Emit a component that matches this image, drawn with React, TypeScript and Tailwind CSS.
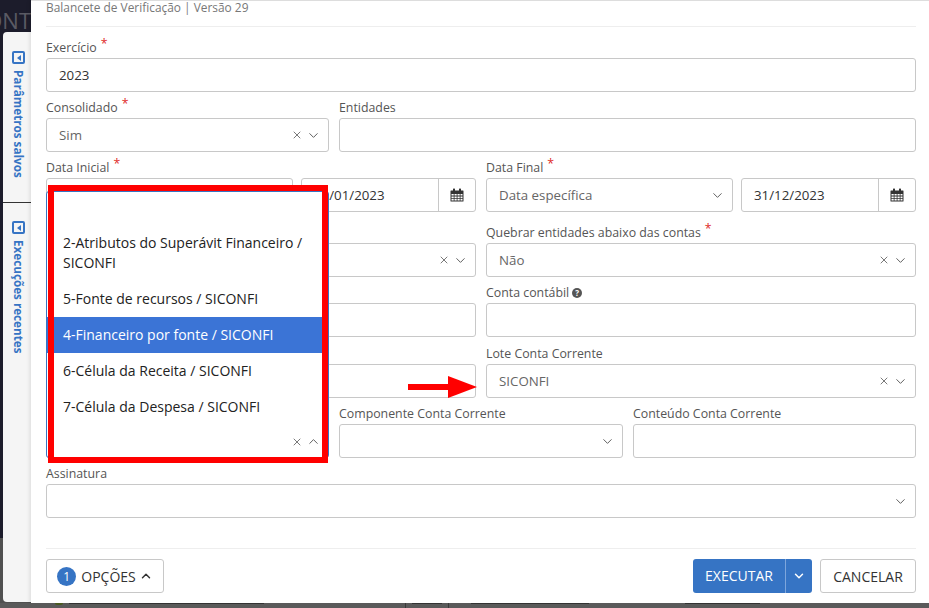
import { ChevronDown, ChevronUp, X } from "lucide-react";
import { ReactNode } from "react";

const borderBox = "h-[34px] rounded-[3px] border border-[#c8c8c8] bg-white";

function Label({ children, required }: { children?: ReactNode; required?: boolean }) {
  return (
    <div className="h-[26px] flex items-end pb-[2px] text-[12.35px] font-medium leading-[16px] text-[#555]">
      {children}
      {required && <span className="relative -top-[4px] ml-[4px] text-[#e02b27]">*</span>}
    </div>
  );
}

function Select({ value, clear = true }: { value?: string; clear?: boolean }) {
  return (
    <div className={`${borderBox} flex items-center pl-[12px] pr-[7px] text-[13.3px] text-[#666]`}>
      <span className="flex-1 truncate pt-[1px]">{value}</span>
      {clear && <X className="w-[12px] h-[12px] mr-[3px] text-[#666]" strokeWidth={1.75} />}
      <ChevronDown className="w-[15px] h-[15px] text-[#555]" strokeWidth={1.5} />
    </div>
  );
}

function TextBox({ value }: { value?: string }) {
  return (
    <div className={`${borderBox} flex items-center px-[12px] pt-[1px] text-[13.3px] text-[#333]`}>{value}</div>
  );
}

function CalendarIcon() {
  return (
    <svg viewBox="0 0 14 14" className="w-[14px] h-[14px] text-[#333]" fill="currentColor">
      <path d="M1 2.5h12a.5.5 0 0 1 .5.5v10a.5.5 0 0 1-.5.5H1a.5.5 0 0 1-.5-.5V3a.5.5 0 0 1 .5-.5Zm.5 3.5v1.6h2.2V6Zm3 0v1.6h2.2V6Zm3 0v1.6h2.2V6Zm3 0v1.6h2V6Zm-9 2.4V10h2.2V8.4Zm3 0V10h2.2V8.4Zm3 0V10h2.2V8.4Zm3 0V10h2V8.4Zm-9 2.4v1.7h2.2v-1.7Zm3 0v1.7h2.2v-1.7Zm3 0v1.7h2.2v-1.7Zm3 0v1.7h2v-1.7Z" fillRule="evenodd" />
      <rect x="3" y="0.5" width="2" height="3.5" rx="0.6" />
      <rect x="9" y="0.5" width="2" height="3.5" rx="0.6" />
    </svg>
  );
}

function DateBox({ value }: { value: string }) {
  return (
    <div className={`${borderBox} flex items-center text-[13.3px] text-[#333]`}>
      <span className="flex-1 px-[12px] pt-[1px]">{value}</span>
      <span className="w-[37px] h-full flex items-center justify-center border-l border-[#c8c8c8]">
        <CalendarIcon />
      </span>
    </div>
  );
}

function SideTab({ label, className }: { label: string; className: string }) {
  return (
    <div className={`flex flex-col items-center pl-[5px] pr-[2px] ${className}`}>
      <span className="w-[13px] h-[13px] shrink-0 rounded-[2px] border-2 border-[#3674c4] flex items-center justify-center">
        <span className="w-0 h-0 border-y-[3px] border-y-transparent border-r-[4px] border-r-[#3674c4]" />
      </span>
      <span className="mt-[6px] [writing-mode:vertical-rl] text-[11.7px] leading-[14px] font-bold text-[#3674c4] whitespace-nowrap">
        {label}
      </span>
    </div>
  );
}

const options = [
  "2-Atributos do Superávit Financeiro / SICONFI",
  "5-Fonte de recursos / SICONFI",
  "4-Financeiro por fonte / SICONFI",
  "6-Célula da Receita / SICONFI",
  "7-Célula da Despesa / SICONFI",
];

export default function App() {
  return (
    <div className="relative w-[929px] h-[608px] overflow-hidden flex flex-col bg-[linear-gradient(#1c1c2b_538px,#505050_538px)] font-['Open_Sans',sans-serif]">
      <div className="flex flex-1 min-h-0">
        {/* left strip with page behind and saved tabs */}
        <div className="w-[31px] shrink-0 flex flex-col">
          <div className="h-[32px] text-[22px] leading-[32px] pt-[4px] text-[#5a5a64] whitespace-nowrap overflow-hidden flex justify-end">
            ONT
          </div>
          <div className="ml-[3px] h-[570px] rounded-l-[4px] bg-[#f5f5f5] flex flex-col">
            <SideTab label="Parâmetros salvos" className="h-[171px] pt-[19px] border-b border-[#333]" />
            <SideTab label="Execuções recentes" className="flex-1 pt-[18px]" />
          </div>
        </div>

        {/* modal */}
        <div className="flex-1 h-[603px] bg-white pr-[13px] pl-[15px] flex flex-col shadow-[-2px_0_3px_rgba(0,0,0,0.08)] border-t border-[#ddd]">
          <div className="h-[26px] border-b border-[#eee] text-[11.9px] leading-[13px] text-[#777]">
            Balancete de Verificação | Versão 29
          </div>

          <div className="mt-[5px] flex flex-col">
            <Label required>Exercício</Label>
            <TextBox value="2023" />

            <div className="flex gap-[10px]">
              <div className="w-[283px]">
                <Label required>Consolidado</Label>
                <Select value="Sim" />
              </div>
              <div className="flex-1">
                <Label>Entidades</Label>
                <TextBox />
              </div>
            </div>

            <div className="flex gap-[10px]">
              <div className="w-[430px]">
                <Label required>Data Inicial</Label>
                <div className="flex gap-[8px]">
                  <div className="w-[247px]">
                    <Select clear={false} />
                  </div>
                  <div className="flex-1">
                    <DateBox value="01/01/2023" />
                  </div>
                </div>
              </div>
              <div className="flex-1">
                <Label required>Data Final</Label>
                <div className="flex gap-[8px]">
                  <div className="w-[247px]">
                    <Select value="Data específica" clear={false} />
                  </div>
                  <div className="flex-1">
                    <DateBox value="31/12/2023" />
                  </div>
                </div>
              </div>
            </div>

            <div className="flex gap-[10px] mt-[5px]">
              <div className="w-[430px]">
                <Label />
                <Select />
              </div>
              <div className="flex-1">
                <Label required>Quebrar entidades abaixo das contas</Label>
                <Select value="Não" />
              </div>
            </div>

            <div className="flex gap-[10px]">
              <div className="w-[430px]">
                <Label />
                <TextBox />
              </div>
              <div className="flex-1">
                <Label>
                  Conta contábil
                  <span className="ml-[3px] w-[10px] h-[10px] mb-[3px] rounded-full bg-[#555] text-white text-[8px] leading-[10px] text-center font-bold self-end">
                    ?
                  </span>
                </Label>
                <TextBox />
              </div>
            </div>

            <div className="flex gap-[10px] mt-[1px]">
              <div className="w-[430px]">
                <Label />
                <TextBox />
              </div>
              <div className="flex-1">
                <Label>Lote Conta Corrente</Label>
                <Select value="SICONFI" />
              </div>
            </div>

            <div className="flex gap-[10px]">
              <div className="w-[283px]">
                <Label />
                <Select />
              </div>
              <div className="w-[284px]">
                <Label>Componente Conta Corrente</Label>
                <Select clear={false} />
              </div>
              <div className="flex-1">
                <Label>Conteúdo Conta Corrente</Label>
                <TextBox />
              </div>
            </div>

            <Label>Assinatura</Label>
            <Select clear={false} />
          </div>

          <div className="mt-[30px] h-[45px] border-t border-[#eee] flex items-end">
            <button className="h-[34px] w-[118px] rounded-[3px] border border-[#c8c8c8] bg-white flex items-center justify-center text-[14px] text-[#333]">
              <span className="w-[19px] h-[19px] rounded-full bg-[#3674c4] text-white text-[12px] leading-[19px] text-center mr-[5px]">
                1
              </span>
              OPÇÕES
              <ChevronUp className="w-[14px] h-[14px] ml-[3px]" strokeWidth={2.5} />
            </button>
            <div className="flex-1" />
            <button className="h-[34px] w-[119px] rounded-[3px] bg-[#3674c4] text-white flex items-center text-[14px]">
              <span className="w-[93px] text-center border-r border-[#7ea6dc] leading-[34px]">EXECUTAR</span>
              <ChevronDown className="w-[14px] h-[14px] ml-[6px]" strokeWidth={2.5} />
            </button>
            <button className="ml-[8px] h-[34px] w-[96px] rounded-[3px] border border-[#c8c8c8] bg-white text-[14px] text-[#333]">
              CANCELAR
            </button>
          </div>
        </div>
      </div>

      {/* page behind, bottom strip */}
      <div className="h-[5px] bg-[#5a5a5a] flex items-start pl-[55px] gap-[6px]">
        <span className="w-[8px] h-[2px] rounded-b-full bg-[#4a5a20]" />
        <span className="w-[195px] h-[1px] bg-[#333]" />
        <span className="ml-[135px] w-[1px] h-[5px] bg-[#3a3a3a]" />
        <span className="w-[30px] h-[1px] bg-[#333]" />
        <span className="w-[1px] h-[5px] bg-[#3a3a3a]" />
        <span className="ml-[16px] w-[118px] h-[1px] bg-[#333]" />
        <span className="ml-[90px] w-[75px] h-[1px] bg-[#333]" />
      </div>

      {/* opened dropdown */}
      <div className="absolute left-[46px] top-[191px] w-[283px] h-[267px] rounded-[3px] border border-[#3674c4] bg-white">
        <div className="pt-[33px] text-[14px] leading-[20px] text-[#222]">
          {options.map((option) => (
            <div
              key={option}
              className={`pl-[16px] pr-[18px] py-[8px] ${option.startsWith("4-") ? "bg-[#3b74d6] text-white" : ""}`}
            >
              {option}
            </div>
          ))}
        </div>
        <div className="absolute right-[7px] bottom-[8px] flex items-center">
          <X className="w-[12px] h-[12px] mr-[3px] text-[#666]" strokeWidth={1.75} />
          <ChevronUp className="w-[15px] h-[15px] text-[#555]" strokeWidth={1.5} />
        </div>
      </div>

      {/* annotations */}
      <div className="absolute left-[48px] top-[185px] w-[280px] h-[278px] border-[6px] border-[#ff0000]" />
      <svg className="absolute left-[407px] top-[376px]" width="72" height="22" viewBox="0 0 72 22">
        <rect x="1" y="8" width="41" height="6" fill="#ff0000" />
        <path d="M41 0 L70 11 L41 22 Z" fill="#ff0000" />
      </svg>
    </div>
  );
}
